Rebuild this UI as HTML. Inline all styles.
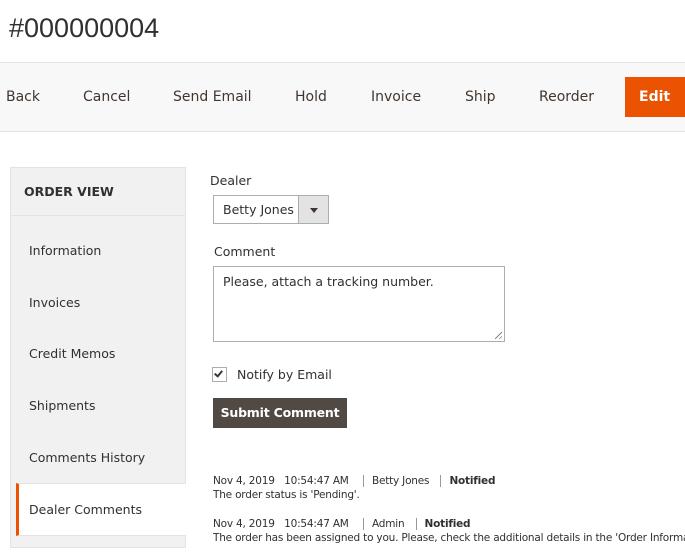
<!DOCTYPE html>
<html><head><style>
*{margin:0;padding:0;box-sizing:border-box}
html,body{width:685px;height:559px;overflow:hidden}
body{background:#fff;font-family:"DejaVu Sans","Liberation Sans",sans-serif;color:#303030;position:relative}
.a{position:absolute;white-space:nowrap}
.tb{position:absolute;left:0;top:62px;width:685px;height:70px;background:#f8f8f8;border-top:1px solid #e3e3e3;border-bottom:1px solid #e3e3e3}
.tb span{position:absolute;top:26px;font-size:14px;color:#41362f}
.side{position:absolute;left:10px;top:167px;width:176px;height:381px;background:#f1f1f1;border:1px solid #e3e3e3}
.it{position:absolute;left:18px;font-size:12.5px;color:#303030}
</style></head><body>
<div class="a" style="left:9px;top:13px;font-size:27px;color:#303030;font-family:'Liberation Sans',sans-serif">#000000004</div>
<div class="tb">
<span style="left:6px">Back</span>
<span style="left:83px">Cancel</span>
<span style="left:173px">Send Email</span>
<span style="left:295px">Hold</span>
<span style="left:371px">Invoice</span>
<span style="left:465px">Ship</span>
<span style="left:539px">Reorder</span>
<div style="position:absolute;left:625px;top:14px;width:60px;height:40px;background:#eb5202;color:#fff;font-size:14px;font-weight:bold;line-height:40px;padding-left:14px">Edit</div>
</div>
<div class="side">
<div class="a" style="left:13px;top:16px;font-size:12.5px;font-weight:bold;color:#303030">ORDER VIEW</div>
<div style="position:absolute;left:0;top:47px;width:174px;height:1px;background:#e3e3e3"></div>
<div class="it" style="top:75px">Information</div>
<div class="it" style="top:127px">Invoices</div>
<div class="it" style="top:178px">Credit Memos</div>
<div class="it" style="top:230px">Shipments</div>
<div class="it" style="top:282px">Comments History</div>
<div style="position:absolute;left:5px;top:315px;width:170px;height:53px;background:#fff;border-left:3px solid #eb5202;border-bottom:1px solid #e3e3e3;border-top:1px solid #e3e3e3"></div>
<div class="it" style="top:334px;color:#303030">Dealer Comments</div>
</div>
<div class="a" style="left:210px;top:173px;font-size:12.5px">Dealer</div>
<div style="position:absolute;left:213px;top:195px;width:116px;height:29px;border:1px solid #adadad;background:#fff">
<div class="a" style="left:9px;top:6px;font-size:12.5px">Betty Jones</div>
<div style="position:absolute;left:84px;top:0;width:30px;height:27px;background:#e3e3e3;border-left:1px solid #adadad"></div>
<div style="position:absolute;left:96px;top:12px;border-left:4px solid transparent;border-right:4px solid transparent;border-top:5px solid #41362f"></div>
</div>
<div class="a" style="left:214px;top:244px;font-size:12.5px">Comment</div>
<div style="position:absolute;left:213px;top:266px;width:292px;height:76px;border:1px solid #adadad">
<div class="a" style="left:9px;top:7px;font-size:12.5px">Please, attach a tracking number.</div>
<div style="position:absolute;right:2px;bottom:2px;width:7px;height:7px;background:linear-gradient(135deg,transparent 45%,#888 46%,#888 54%,transparent 55%,transparent 75%,#888 76%,#888 84%,transparent 85%)"></div>
</div>
<div style="position:absolute;left:212px;top:367px;width:15px;height:15px;border:1px solid #adadad"></div>
<div style="position:absolute;left:216px;top:369px;width:5px;height:8px;border-right:2px solid #41362f;border-bottom:2px solid #41362f;transform:rotate(40deg)"></div>
<div class="a" style="left:237px;top:367px;font-size:12.5px">Notify by Email</div>
<div style="position:absolute;left:213px;top:398px;width:134px;height:30px;background:#514943;color:#fff;font-size:12.5px;font-weight:bold;line-height:30px;text-align:center;letter-spacing:-0.2px">Submit Comment</div>
<div style="position:absolute;left:0;top:0;width:685px;height:559px;overflow:hidden">
<div class="a" style="left:213px;top:475px;font-size:10.5px;letter-spacing:-0.2px">Nov 4, 2019 &nbsp; 10:54:47 AM &nbsp;<span style="border-left:1px solid #999;margin:0 8px"></span>Betty Jones <span style="border-left:1px solid #999;margin:0 8px"></span><b>Notified</b></div>
<div class="a" style="left:213px;top:489px;font-size:10.5px;letter-spacing:-0.2px">The order status is 'Pending'.</div>
<div class="a" style="left:213px;top:518px;font-size:10.5px;letter-spacing:-0.2px">Nov 4, 2019 &nbsp; 10:54:47 AM &nbsp;<span style="border-left:1px solid #999;margin:0 8px"></span>Admin <span style="border-left:1px solid #999;margin:0 8px"></span><b>Notified</b></div>
<div class="a" style="left:213px;top:532px;font-size:10.5px;letter-spacing:-0.2px">The order has been assigned to you. Please, check the additional details in the 'Order Information' tab.</div>
</div>
</body></html>
